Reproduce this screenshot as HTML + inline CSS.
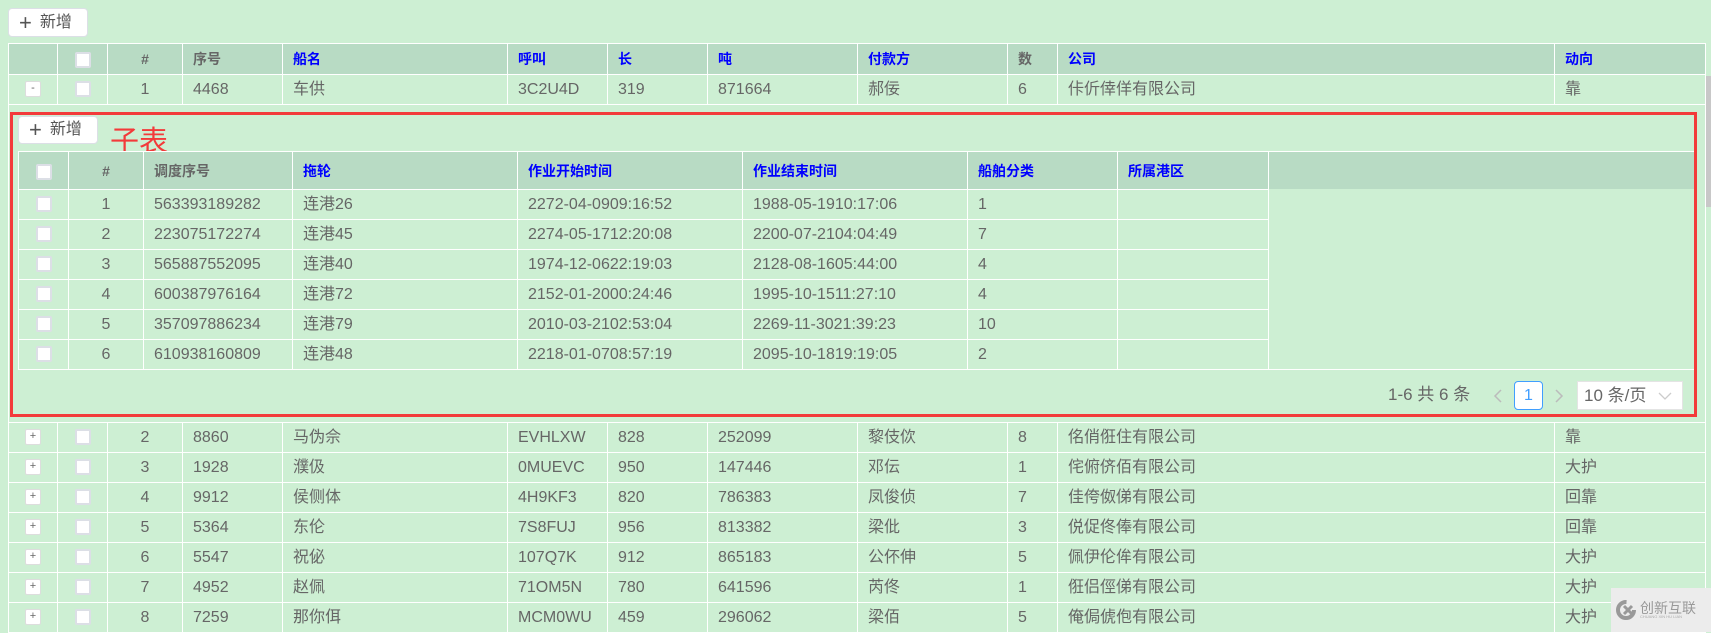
<!DOCTYPE html>
<html><head><meta charset="utf-8"><style>
*{margin:0;padding:0;box-sizing:border-box}
body{width:1711px;height:632px;background:#cdefd3;font-family:"Liberation Sans","Noto Sans CJK SC",sans-serif;color:#666;overflow:hidden;position:relative}
.btn{position:absolute;background:#fff;border:1px solid #dcdfe6;border-radius:4px;font-size:16px;color:#555;display:flex;align-items:center;padding-left:10px;line-height:20px}
.btn b{font-weight:300;font-size:22px;margin-right:8px;line-height:20px}
table{position:absolute;border-collapse:collapse;table-layout:fixed}
td,th{border:1px solid #fff;font-size:16px;text-align:left;padding-left:10px;white-space:nowrap;overflow:hidden;font-weight:normal;line-height:20px;vertical-align:middle}
td span,th span{vertical-align:middle}
th{background:#b8dbc4;font-size:14px;font-weight:bold;color:#666}
th.b{color:#0000ff}
.c{text-align:center;padding-left:0}
.cb{display:inline-block;width:16px;height:16px;background:#fff;border:2px solid #dcdfe6;border-radius:2px}
.ex{display:inline-block;width:16px;height:16px;background:#fff;border:1px solid #ddd;border-radius:2px;font-size:11px;line-height:13px;text-align:center;color:#666}
</style></head><body>
<div class="btn" style="left:8px;top:8px;width:80px;height:29px"><b>+</b>新增</div>

<table style="left:8px;top:43px;width:1697px">
<colgroup><col style="width:49px"><col style="width:50px"><col style="width:75px"><col style="width:100px"><col style="width:225px"><col style="width:100px"><col style="width:100px"><col style="width:150px"><col style="width:150px"><col style="width:50px"><col style="width:497px"><col style="width:151px"></colgroup>
<tr style="height:31px"><th></th><th class="c"><span class="cb"></span></th><th class="c">#</th><th>序号</th><th class="b">船名</th><th class="b">呼叫</th><th class="b">长</th><th class="b">吨</th><th class="b">付款方</th><th>数</th><th class="b">公司</th><th class="b">动向</th></tr>
<tr style="height:30px"><td class="c"><span class="ex">-</span></td><td class="c"><span class="cb"></span></td><td class="c">1</td><td>4468</td><td>车供</td><td>3C2U4D</td><td>319</td><td>871664</td><td>郝佞</td><td>6</td><td>佧伒倖佯有限公司</td><td>靠</td></tr>
<tr style="height:318px"><td colspan="12" style="border-top:1px solid #fff"></td></tr>
<tr style="height:30px"><td class="c"><span class="ex">+</span></td><td class="c"><span class="cb"></span></td><td class="c">2</td><td>8860</td><td>马伪佘</td><td>EVHLXW</td><td>828</td><td>252099</td><td>黎伎佽</td><td>8</td><td>佲俏俇住有限公司</td><td>靠</td></tr>
<tr style="height:30px"><td class="c"><span class="ex">+</span></td><td class="c"><span class="cb"></span></td><td class="c">3</td><td>1928</td><td>濮伋</td><td>0MUEVC</td><td>950</td><td>147446</td><td>邓伝</td><td>1</td><td>侘俯侪佰有限公司</td><td>大护</td></tr>
<tr style="height:30px"><td class="c"><span class="ex">+</span></td><td class="c"><span class="cb"></span></td><td class="c">4</td><td>9912</td><td>侯侧体</td><td>4H9KF3</td><td>820</td><td>786383</td><td>凤俊侦</td><td>7</td><td>佳侉伮俤有限公司</td><td>回靠</td></tr>
<tr style="height:30px"><td class="c"><span class="ex">+</span></td><td class="c"><span class="cb"></span></td><td class="c">5</td><td>5364</td><td>东伦</td><td>7S8FUJ</td><td>956</td><td>813382</td><td>梁仳</td><td>3</td><td>侻促佟俸有限公司</td><td>回靠</td></tr>
<tr style="height:30px"><td class="c"><span class="ex">+</span></td><td class="c"><span class="cb"></span></td><td class="c">6</td><td>5547</td><td>祝佖</td><td>107Q7K</td><td>912</td><td>865183</td><td>公伓伸</td><td>5</td><td>佩伊伦侔有限公司</td><td>大护</td></tr>
<tr style="height:30px"><td class="c"><span class="ex">+</span></td><td class="c"><span class="cb"></span></td><td class="c">7</td><td>4952</td><td>赵佩</td><td>71OM5N</td><td>780</td><td>641596</td><td>芮佟</td><td>1</td><td>俇侣俓俤有限公司</td><td>大护</td></tr>
<tr style="height:30px"><td class="c"><span class="ex">+</span></td><td class="c"><span class="cb"></span></td><td class="c">8</td><td>7259</td><td>那你佴</td><td>MCM0WU</td><td>459</td><td>296062</td><td>梁佰</td><td>5</td><td>俺侷俿佨有限公司</td><td>大护</td></tr>
</table>

<div style="position:absolute;left:10px;top:112px;width:1687px;height:305px;border:3px solid #f33a3a;background:#cdefd3"></div>
<div class="btn" style="left:18px;top:116px;width:80px;height:28px"><b>+</b>新增</div>
<div style="position:absolute;left:110px;top:124px;font-size:29px;color:#f33a3a;line-height:36px">子表</div>

<div style="position:absolute;left:18px;top:151px;width:1676px;height:38px;background:#b8dbc4;border-top:1px solid #fff"></div>
<table style="left:18px;top:151px;width:1250px">
<colgroup><col style="width:50px"><col style="width:75px"><col style="width:149px"><col style="width:225px"><col style="width:225px"><col style="width:225px"><col style="width:150px"><col style="width:151px"></colgroup>
<tr style="height:38px"><th class="c"><span class="cb"></span></th><th class="c">#</th><th>调度序号</th><th class="b">拖轮</th><th class="b">作业开始时间</th><th class="b">作业结束时间</th><th class="b">船舶分类</th><th class="b">所属港区</th></tr>
<tr style="height:30px"><td class="c"><span class="cb"></span></td><td class="c">1</td><td>563393189282</td><td>连港26</td><td>2272-04-0909:16:52</td><td>1988-05-1910:17:06</td><td>1</td><td></td></tr>
<tr style="height:30px"><td class="c"><span class="cb"></span></td><td class="c">2</td><td>223075172274</td><td>连港45</td><td>2274-05-1712:20:08</td><td>2200-07-2104:04:49</td><td>7</td><td></td></tr>
<tr style="height:30px"><td class="c"><span class="cb"></span></td><td class="c">3</td><td>565887552095</td><td>连港40</td><td>1974-12-0622:19:03</td><td>2128-08-1605:44:00</td><td>4</td><td></td></tr>
<tr style="height:30px"><td class="c"><span class="cb"></span></td><td class="c">4</td><td>600387976164</td><td>连港72</td><td>2152-01-2000:24:46</td><td>1995-10-1511:27:10</td><td>4</td><td></td></tr>
<tr style="height:30px"><td class="c"><span class="cb"></span></td><td class="c">5</td><td>357097886234</td><td>连港79</td><td>2010-03-2102:53:04</td><td>2269-11-3021:39:23</td><td>10</td><td></td></tr>
<tr style="height:30px"><td class="c"><span class="cb"></span></td><td class="c">6</td><td>610938160809</td><td>连港48</td><td>2218-01-0708:57:19</td><td>2095-10-1819:19:05</td><td>2</td><td></td></tr>
</table>
<div style="position:absolute;left:18px;top:369px;width:1676px;height:1px;background:#fff"></div>

<div style="position:absolute;left:1388px;top:384px;font-size:17px;color:#666;line-height:22px">1-6 共 6 条</div>
<svg style="position:absolute;left:1492px;top:388px" width="12" height="16" viewBox="0 0 12 16"><path d="M9 2L3 8l6 6" fill="none" stroke="#bbb" stroke-width="1.5"/></svg>
<div style="position:absolute;left:1514px;top:381px;width:29px;height:29px;border:1px solid #409eff;border-radius:4px;background:#fff;color:#409eff;font-size:16px;text-align:center;line-height:27px">1</div>
<svg style="position:absolute;left:1553px;top:388px" width="12" height="16" viewBox="0 0 12 16"><path d="M3 2l6 6-6 6" fill="none" stroke="#bbb" stroke-width="1.5"/></svg>
<div style="position:absolute;left:1577px;top:381px;width:106px;height:29px;border:1px solid #e4e4e4;background:#fff;font-size:17px;color:#666;padding-left:6px;line-height:28px">10 条/页<svg style="position:absolute;right:10px;top:10px" width="14" height="9" viewBox="0 0 14 9"><path d="M1 1l6 6 6-6" fill="none" stroke="#ccc" stroke-width="1.3"/></svg></div>

<div style="position:absolute;left:1706px;top:76px;width:5px;height:131px;background:#c8c8c8"></div>

<div style="position:absolute;left:1611px;top:588px;width:100px;height:44px;background:#ececec;display:flex;align-items:center;padding-left:4px">
<svg width="22" height="22" viewBox="0 0 22 22"><circle cx="11" cy="11" r="8" fill="none" stroke="#999" stroke-width="4" stroke-dasharray="38 12"/><path d="M9 7l8 8M17 7l-8 8" stroke="#999" stroke-width="3"/></svg>
<div style="margin-left:3px;line-height:1"><div style="font-size:14px;color:#999">创新互联</div><div style="font-size:4px;color:#aaa">CHUANG XIN HU LIAN</div></div>
</div>
</body></html>
